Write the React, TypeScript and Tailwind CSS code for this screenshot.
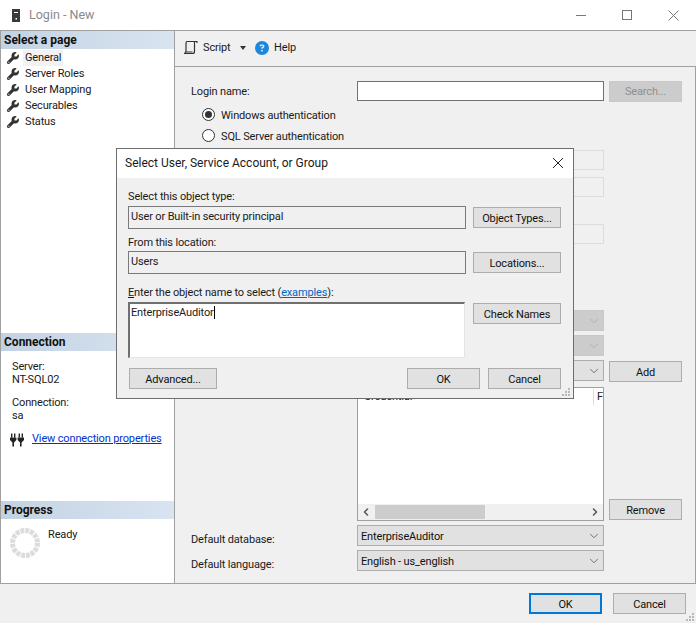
import { FaWrench, FaCircleQuestion } from "react-icons/fa6";
import { ChevronDown, ChevronLeft, ChevronRight } from "lucide-react";

const pages = ["General", "Server Roles", "User Mapping", "Securables", "Status"];

function SectionHeader({ title }: { title: string }) {
  return (
    <div className="h-[18px] pl-[3px] flex items-center font-bold text-[12px] tracking-normal text-[#111] bg-gradient-to-r from-[#c3d2e2] to-[#d9e4f1]">
      {title}
    </div>
  );
}

function Button({ label, className = "" }: { label: string; className?: string }) {
  return (
    <div className={"flex items-center justify-center h-[21px] pt-[2px] border border-[#adadad] bg-[#e1e1e1] text-[#111] " + className}>
      {label}
    </div>
  );
}

function Combo({ text = "", disabled = false }: { text?: string; disabled?: boolean }) {
  return (
    <div
      className={
        "w-[247px] h-[21px] flex items-center justify-between pl-[3px] pr-[2px] border " +
        (disabled ? "border-[#c8c8c8] bg-[#cccccc]" : "border-[#adadad] bg-[#e1e1e1]")
      }
    >
      <span className="text-[#111] pt-[2px]">{text}</span>
      <ChevronDown size={14} strokeWidth={1.2} className={disabled ? "text-[#a8a8a8]" : "text-[#444]"} />
    </div>
  );
}

function Radio({ label, checked = false }: { label: string; checked?: boolean }) {
  return (
    <div className="flex items-center h-[21px] pl-[11px] gap-[6px]">
      <div className="w-[13px] h-[13px] rounded-full border border-[#333] bg-white flex items-center justify-center">
        {checked && <div className="w-[7px] h-[7px] rounded-full bg-[#333]" />}
      </div>
      <span className="pt-[2px]">{label}</span>
    </div>
  );
}

function Grip({ className }: { className: string }) {
  return (
    <svg width="10" height="10" viewBox="0 0 10 10" className={className} fill="#b8b8b8">
      <rect x="7" y="1" width="2" height="2" />
      <rect x="4" y="4" width="2" height="2" />
      <rect x="7" y="4" width="2" height="2" />
      <rect x="1" y="7" width="2" height="2" />
      <rect x="4" y="7" width="2" height="2" />
      <rect x="7" y="7" width="2" height="2" />
    </svg>
  );
}

function Sidebar() {
  return (
    <div className="w-[175px] shrink-0 bg-white border-x border-[#a0a0a0] flex flex-col">
      <div className="h-[302px]">
        <SectionHeader title="Select a page" />
        <div className="pt-px">
          {pages.map((p, i) => (
            <div key={p} className="h-4 flex items-center pl-[6px] gap-[6px]">
              <FaWrench size={12} className="text-[#333]" />
              <span className={i === 0 ? "bg-[#f2f2f2] px-0.5 -ml-0.5" : ""}>{p}</span>
            </div>
          ))}
        </div>
      </div>
      <div className="h-[168px]">
        <SectionHeader title="Connection" />
        <div className="pl-[11px] pt-[10px] leading-[12px]">
          <div>Server:</div>
          <div className="leading-[13px]">NT-SQL02</div>
          <div className="mt-[10px] leading-[13px]">Connection:</div>
          <div className="leading-[13px]">sa</div>
        </div>
        <div className="flex items-center pl-[9px] gap-[8px] mt-[9px]">
          <svg width="14" height="15" viewBox="0 0 14 14" fill="#222">
            <rect x="1" y="1" width="1.4" height="4" />
            <rect x="4" y="1" width="1.4" height="4" />
            <rect x="8.6" y="1" width="1.4" height="4" />
            <rect x="11.6" y="1" width="1.4" height="4" />
            <path d="M0 5h6.400v2.500L4 10v4H2.400v-4L0 7.500zM7.600 5H14v2.500L11.600 10v4H10v-4L7.600 7.500z" />
          </svg>
          <span className="text-[#0033cc] underline whitespace-nowrap">View connection properties</span>
        </div>
      </div>
      <div className="flex-1">
        <SectionHeader title="Progress" />
        <div className="flex pl-[9px] pt-[9px] gap-[8px]">
          <svg width="30" height="30" viewBox="0 0 30 30">
            <circle cx="15" cy="15" r="12.500" fill="none" stroke="#dcdcdc" strokeWidth="5" strokeDasharray="3.900 1" />
          </svg>
          <span className="-mt-[1px]">Ready</span>
        </div>
      </div>
    </div>
  );
}

function Toolbar() {
  return (
    <div className="h-9 border-b border-[#a0a0a0] flex items-center pl-2 pb-[2px]">
      <svg width="15" height="15" viewBox="0 0 15 15" fill="none" stroke="#333" strokeWidth="1.2">
        <path d="M4 1.500h10v1.500M4 1.500C3 1.500 3 3 3 4v8.500M11.500 2v9.500c0 1.500 -1 2 -2 2H1c1 0 1.500 -.7 1.500 -1.500h7" />
      </svg>
      <span className="ml-[5px] w-[27px]">Script</span>
      <span className="ml-[10px] w-0 h-0 border-x-[3px] border-x-transparent border-t-[4px] border-t-[#333]" />
      <FaCircleQuestion size={14} className="ml-[9px] text-[#1b87dd]" />
      <span className="ml-[5px]">Help</span>
    </div>
  );
}

function LoginForm() {
  return (
    <div className="flex-1 border-r border-[#a0a0a0] pl-4 pt-[13px]">
      <div className="flex items-center h-[22px]">
        <span className="w-[166px] pt-[2px]">Login name:</span>
        <div className="w-[247px] h-[20px] border border-[#707070] bg-white" />
        <Button label="Search..." className="ml-[5px] w-[73px] !border-[#c8c8c8] !bg-[#cccccc] !text-[#8f8f8f]" />
      </div>
      <div className="mt-[2px]">
        <Radio label="Windows authentication" checked />
        <Radio label="SQL Server authentication" />
      </div>
      <div className="ml-[166px] mt-[4px] w-[247px]">
        <div className="h-[20px] border border-[#dcdcdc]" />
        <div className="h-[20px] mt-[7px] border border-[#dcdcdc]" />
        <div className="h-[20px] mt-[27px] border border-[#dcdcdc]" />
      </div>
      <div className="ml-[166px] mt-[66px] flex flex-col gap-1">
        <Combo disabled />
        <Combo disabled />
        <div className="relative">
          <Combo />
          <Button label="Add" className="absolute left-[252px] top-px w-[73px]" />
        </div>
      </div>
      <div className="ml-[166px] mt-[6px] flex items-end">
        <div className="w-[247px] h-[134px] border border-[#a0a0a0] bg-white flex flex-col">
          <div className="flex-1 flex justify-between pl-[6px] pt-[1px]">
            <span>Credential</span>
            <span className="border-l border-[#dcdcdc] pl-[3px] w-[10px] h-[16px]">F</span>
          </div>
          <div className="h-[16px] bg-[#f0f0f0] flex items-center">
            <ChevronLeft size={12} strokeWidth={3} className="ml-[2px] text-[#555]" />
            <div className="ml-[3px] w-[110px] h-[14px] bg-[#cdcdcd]" />
            <ChevronRight size={12} strokeWidth={3} className="ml-auto mr-[2px] text-[#555]" />
          </div>
        </div>
        <Button label="Remove" className="ml-[5px] mb-px w-[73px]" />
      </div>
      <div className="flex items-center h-[21px] mt-[4px]">
        <span className="w-[166px] translate-y-[4px]">Default database:</span>
        <Combo text="EnterpriseAuditor" />
      </div>
      <div className="flex items-center h-[21px] mt-[4px]">
        <span className="w-[166px] translate-y-[4px]">Default language:</span>
        <Combo text="English - us_english" />
      </div>
    </div>
  );
}

function SelectDialog() {
  return (
    <div className="absolute left-[116px] top-[148px] w-[458px] h-[251px] border border-[#6e6e6e] bg-[#f0f0f0]">
      <div className="h-[29px] bg-white flex items-center justify-between pl-2 pr-[9px] pb-[2px] text-[12px] tracking-normal">
        <span>Select User, Service Account, or Group</span>
        <svg width="12" height="12" viewBox="0 0 12 12" stroke="#222" strokeWidth="1">
          <path d="M1 1l10 10M11 1L1 11" />
        </svg>
      </div>
      <div className="pl-[11px] pr-3 flex flex-col">
        <div className="h-[28px] flex items-end pb-px">Select this object type:</div>
        <div className="flex items-center">
          <div className="w-[338px] h-[23px] border border-[#7a7a7a] flex items-center pl-[2px] pb-[2px]">User or Built-in security principal</div>
          <Button label="Object Types..." className="ml-[7px] w-[88px]" />
        </div>
        <div className="h-[22px] flex items-end">From this location:</div>
        <div className="flex items-center">
          <div className="w-[338px] h-[23px] border border-[#7a7a7a] flex items-center pl-[2px] pb-[2px]">Users</div>
          <Button label="Locations..." className="ml-[7px] w-[88px]" />
        </div>
        <div className="h-[28px] flex items-end pb-px">
          <span>
            <span className="underline">E</span>nter the object name to select (<span className="text-[#0067c0] underline">examples</span>):
          </span>
        </div>
        <div className="flex items-start">
          <div className="w-[337px] h-[56px] bg-white border border-[#e4e4e4] border-t-2 border-l-2 border-t-[#707070] border-l-[#707070] pl-px pt-px">
            EnterpriseAuditor<span className="border-r border-black" />
          </div>
          <Button label="Check Names" className="ml-2 mt-px w-[88px]" />
        </div>
        <div className="flex mt-[10px] pl-px">
          <Button label="Advanced..." className="w-[88px]" />
          <Button label="OK" className="ml-[190px] w-[73px]" />
          <Button label="Cancel" className="ml-2 w-[73px]" />
        </div>
      </div>
      <Grip className="absolute right-[2px] bottom-[1px]" />
    </div>
  );
}

export default function App() {
  return (
    <div className="relative w-[696px] h-[623px] overflow-hidden bg-[#f0f0f0] text-[11px] tracking-[-0.15px] leading-4 text-[#1a1a1a] [font-family:Roboto,sans-serif] flex flex-col">
      <div className="h-[30px] bg-white flex items-center pl-3 border-b border-[#a0a0a0] box-content">
        <svg width="8" height="13" viewBox="0 0 8 13" fill="#3a3a3a">
          <path d="M0 0h8v13H0zM2 3v1h4V3zM3.500 9v1.500h1.500V9z" fillRule="evenodd" />
        </svg>
        <span className="ml-[9px] text-[#8a8a8a] text-[12.5px] tracking-normal">Login - New</span>
        <div className="ml-auto flex items-center gap-[36px] pr-[17px]">
          <div className="w-[10px] h-px bg-[#777]" />
          <div className="w-[10px] h-[10px] border border-[#777]" />
          <svg width="11" height="11" viewBox="0 0 11 11" stroke="#777" strokeWidth="1">
            <path d="M.5.5l10 10M10.500.5l-10 10" />
          </svg>
        </div>
      </div>
      <div className="flex h-[552px] border-b border-[#a0a0a0] box-content">
        <Sidebar />
        <div className="flex-1 flex flex-col">
          <Toolbar />
          <LoginForm />
        </div>
      </div>
      <div className="flex-1 flex justify-end items-start pt-[9px] pr-[10px]">
        <Button label="OK" className="w-[73px] !border-2 !border-[#0078d7]" />
        <Button label="Cancel" className="ml-[11px] w-[73px]" />
      </div>
      <Grip className="absolute right-[1px] bottom-[1px]" />
      <SelectDialog />
    </div>
  );
}
